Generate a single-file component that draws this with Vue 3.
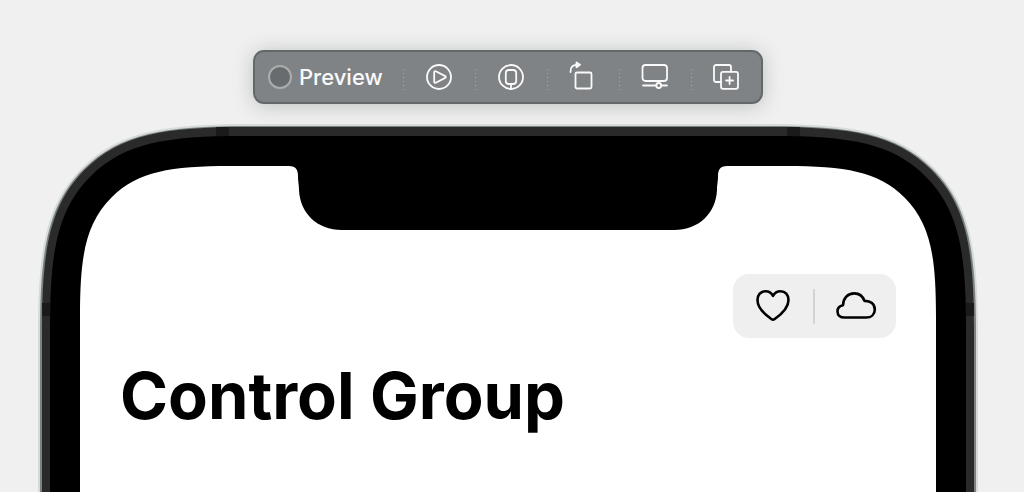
<script setup>
// Outline of a continuous-curvature corner, filled towards the lower right of the tile.
const tile = 232
function corner(x, y, r) {
  const p = (a, b) => `${(x + a * r).toFixed(2)} ${(y + b * r).toFixed(2)}`
  return [
    `M${tile} ${y}`,
    `L${p(1.42, 0)}`,
    `C${p(0.86, 0)} ${p(0.545, 0.049)} ${p(0.297, 0.297)}`,
    `C${p(0.049, 0.545)} ${p(0, 0.86)} ${p(0, 1.42)}`,
    `V${tile}H${tile}Z`,
  ].join('')
}
const layers = [
  { d: corner(0, 0, 148), fill: '#d6dada' },
  { d: corner(2, 2, 146), fill: '#7c8284' },
  { d: corner(4, 3, 144), fill: '#2a2a2a' },
  { d: corner(12, 12, 136), fill: '#000' },
  { d: corner(42, 42, 106), fill: '#fff' },
]
const sides = ['left', 'right']
const tools = [
  { id: 'play', label: 'Live Preview' },
  { id: 'device', label: 'Preview on Device' },
  { id: 'rotate', label: 'Rotate' },
  { id: 'inspect', label: 'Inspect Preview' },
  { id: 'duplicate', label: 'Duplicate Preview' },
]
</script>

<template>
  <main class="canvas">
    <div class="toolbar" role="toolbar" aria-label="Preview">
      <button class="status" type="button"><span class="dot"></span>Preview</button>
      <button v-for="tool in tools" :key="tool.id" class="tool" type="button" :aria-label="tool.label">
        <svg width="32" height="32" viewBox="0 0 32 32" fill="none" stroke="currentColor" stroke-width="1.8" stroke-linejoin="round" stroke-linecap="round" aria-hidden="true">
          <template v-if="tool.id === 'play'">
            <circle cx="16" cy="16" r="12" />
            <path d="M11.2 11.2c0-.9.8-1.3 1.6-.9l9.400 4.800c.8.4.8 1.400 0 1.800l-9.400 4.800c-.8.4-1.600 0-1.600-.9z" />
          </template>
          <template v-else-if="tool.id === 'device'">
            <circle cx="16" cy="16" r="12" />
            <rect x="10.8" y="9" width="10.4" height="14" rx="3" />
            <path d="M16 23v5" />
          </template>
          <template v-else-if="tool.id === 'rotate'">
            <rect x="8.5" y="11.5" width="16" height="16" rx="1.5" />
            <path d="M3.5 11c0-5 2-7 6-7" />
            <path d="M9.5 1.5 13 3.8 9.5 6.3z" fill="currentColor" />
          </template>
          <template v-else-if="tool.id === 'inspect'">
            <rect x="3.5" y="4" width="24.5" height="16" rx="3" />
            <path d="M4 24.5h13.5M22 24.5h6" />
            <circle cx="19.7" cy="24.5" r="2.5" />
          </template>
          <template v-else>
            <path d="M11 21H6a2 2 0 0 1-2-2V6a2 2 0 0 1 2-2h13a2 2 0 0 1 2 2v4.5" />
            <rect x="11" y="10.8" width="17" height="17" rx="2" />
            <path d="M19.6 16v7M16.100 19.500h7" />
          </template>
        </svg>
      </button>
    </div>

    <section class="phone">
      <div class="bezel" aria-hidden="true">
        <div class="crown">
          <template v-for="side in sides" :key="side">
            <svg :class="['corner', side]" width="232" height="232" viewBox="0 0 232 232">
              <path v-for="layer in layers" :key="layer.fill" :d="layer.d" :fill="layer.fill" />
              <path d="M178 3h13v9h-13zM4 179h8v13H4z" fill="#1a1a1a" />
            </svg>
            <div v-if="side === 'left'" class="edge">
              <svg class="notch" width="438" height="65" viewBox="0 0 438 65">
                <path d="M0 0V1C7 1 9 5 9 11C9 17 10 19 10 25C11 48 28 65 53 65H385C410 65 427 48 428 25C428 19 429 17 429 11C429 5 431 1 438 1V0Z" />
              </svg>
            </div>
          </template>
        </div>
        <div class="rails"></div>
      </div>

      <div class="screen">
        <div class="group" role="group" aria-label="Control Group">
          <button type="button" aria-label="Favorite">
            <svg width="44" height="36" viewBox="0 0 44 36" aria-hidden="true">
              <path d="M22 7.8C20.3 4.6 17.5 3.2 14.5 3.2C9.7 3.2 6.5 7 6.5 12C6.5 19.5 13 26 20.6 31.2Q22 32.2 23.4 31.2C31 26 37.5 19.5 37.5 12C37.5 7 34.3 3.2 29.5 3.2C26.5 3.2 23.7 4.6 22 7.8Z" />
            </svg>
          </button>
          <span class="divider"></span>
          <button type="button" aria-label="Cloud">
            <svg width="44" height="36" viewBox="0 0 44 36" aria-hidden="true">
              <path d="M10.5 29.5C6.2 29.500 3.500 27.200 3.500 23.500C3.500 20.300 5.700 17.900 9 17.300C9.200 10.300 13.800 5.400 20.200 5.400C25 5.400 28.800 8.200 30.500 12.900C36.500 12.600 40.800 16.200 40.800 21.400C40.800 26.200 37.300 29.500 32.200 29.500Z" />
            </svg>
          </button>
        </div>
        <h1>Control Group</h1>
      </div>
    </section>
  </main>
</template>

<style>
body {
  margin: 0;
  background: #f0f0f0;
}
</style>

<style scoped>
.canvas {
  box-sizing: border-box;
  min-height: 100vh;
  padding: 50px 46px 0 38px;
  display: flex;
  flex-direction: column;
  align-items: center;
  gap: 20px;
  background: #f0f0f0;
  font-family: Inter, "Liberation Sans", sans-serif;
}

button {
  margin: 0;
  padding: 0;
  border: 0;
  background: none;
  color: inherit;
  font: inherit;
}

.toolbar {
  box-sizing: border-box;
  height: 54px;
  display: flex;
  align-items: center;
  border: 2px solid #63686a;
  border-radius: 11px;
  background: #7f8385;
  color: #fafafa;
  box-shadow: 0 2px 20px rgba(80, 92, 88, 0.32);
}

.status {
  width: 148px;
  padding-left: 13px;
  display: flex;
  align-items: center;
  gap: 7px;
  font-size: 22px;
  font-weight: 500;
  line-height: 28px;
}

.dot {
  box-sizing: border-box;
  width: 24px;
  height: 24px;
  border: 2px solid #a9adad;
  border-radius: 50%;
  background: #686c6e;
}

.tool {
  box-sizing: border-box;
  width: 72px;
  height: 32px;
  display: flex;
  align-items: center;
  justify-content: center;
  background: repeating-linear-gradient(#a5aaaa 0 1px, transparent 1px 4px) left 8px / 1px 24px no-repeat;
}

.tool:last-child {
  width: 70px;
}

.phone {
  position: relative;
  align-self: stretch;
  flex: 1;
  display: flex;
}

.bezel {
  position: absolute;
  inset: 0;
  display: flex;
  flex-direction: column;
  overflow: hidden;
}

.crown {
  display: flex;
}

.corner {
  display: block;
  flex: none;
}

.right {
  transform: scaleX(-1);
}

.edge {
  flex: 1;
  display: flex;
  justify-content: center;
  background: linear-gradient(#d6dada 2px, #7c8284 2px 3px, #2a2a2a 3px 12px, #000 12px 42px, #fff 42px);
}

.notch {
  flex: none;
  margin-top: 41px;
}

.rails {
  flex: 1;
  background:
    linear-gradient(90deg, #d6dada 2px, #7c8284 2px 4px, #2a2a2a 4px 12px, #000 12px 42px, #fff 42px) left / 50% 100% no-repeat,
    linear-gradient(270deg, #d6dada 2px, #7c8284 2px 4px, #2a2a2a 4px 12px, #000 12px 42px, #fff 42px) right / 50% 100% no-repeat;
}

.screen {
  position: relative;
  flex: 1;
  padding: 150px 82px 40px;
  display: flex;
  flex-direction: column;
  gap: 20px;
}

.group {
  align-self: flex-end;
  height: 64px;
  display: flex;
  align-items: center;
  border-radius: 16px;
  background: #efefef;
}

.group button {
  width: 80px;
  height: 64px;
  display: flex;
  align-items: center;
  justify-content: center;
}

.group button:last-child {
  width: 81px;
}

.group svg {
  fill: none;
  stroke: #000;
  stroke-width: 2.6;
  stroke-linejoin: round;
}

.divider {
  width: 2px;
  height: 35px;
  background: #d4d4d4;
}

h1 {
  margin: 0;
  color: #000;
  font-size: 65px;
  font-weight: 700;
  line-height: 76px;
}
</style>
